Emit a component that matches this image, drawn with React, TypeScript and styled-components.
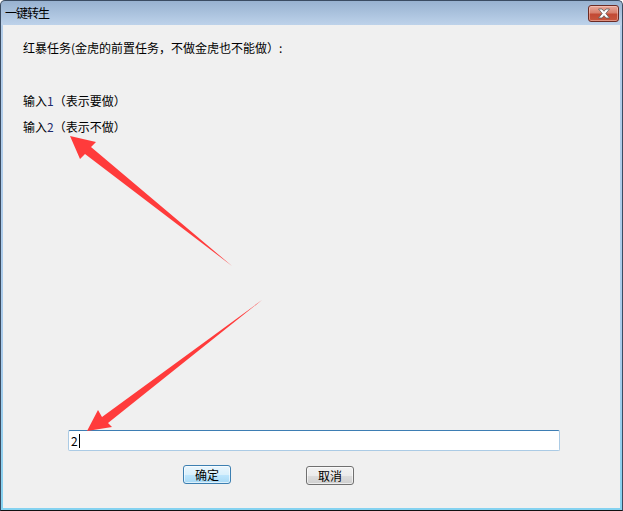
import React from "react";
import styled, { createGlobalStyle } from "styled-components";

const GlobalStyle = createGlobalStyle`
  html, body {
    margin: 0;
    padding: 0;
    width: 623px;
    height: 511px;
    overflow: hidden;
    background: #ffffff;
  }
  body {
    font-family: "Noto Sans CJK SC", "Noto Sans", sans-serif;
    font-size: 12px;
    color: #000;
  }
`;

const Frame = styled.div`
  position: relative;
  width: 623px;
  height: 511px;
  box-sizing: border-box;
  border: 1px solid #3b4c62;
  border-bottom-color: #111;
  border-radius: 5px 5px 0 0;
  background: linear-gradient(
    #98b2d0 0px,
    #bdd2ea 24px,
    #b3cde9 25px,
    #a9cbeb 70%,
    #84d2f0 100%
  );
  display: flex;
  flex-direction: column;
  padding: 0 2px 2px 2px;
`;

const TitleBar = styled.div`
  height: 24px;
  flex: none;
  display: flex;
  align-items: center;
  justify-content: space-between;
  padding: 0 1px 0 2px;
`;

const TitleText = styled.span`
  font-size: 12px;
  line-height: 16px;
  color: #000;
  letter-spacing: -1px;
`;

const CloseButton = styled.div`
  width: 31px;
  height: 17px;
  box-sizing: border-box;
  border: 1px solid #6b2b24;
  border-radius: 3px;
  background: linear-gradient(
    #e9a799 0%,
    #d8806d 45%,
    #c24a34 55%,
    #c8563d 100%
  );
  box-shadow: inset 0 0 0 1px rgba(255, 220, 210, 0.45);
  display: flex;
  align-items: center;
  justify-content: center;
`;

const Content = styled.div`
  flex: 1;
  background: #f0f0f0;
  display: flex;
  flex-direction: column;
  align-items: flex-start;
  padding: 15px 0 0 20px;
`;

const Line = styled.div<{ $gap: number }>`
  margin-top: ${(p) => p.$gap}px;
  font-size: 12px;
  line-height: 16px;
  white-space: nowrap;
`;

const Digit = styled.span`
  color: #1d2a6c;
`;

const TextBox = styled.div`
  margin: 295px 0 0 45px;
  width: 492px;
  height: 21px;
  box-sizing: border-box;
  background: #fff;
  border: 1px solid #abcbe5;
  border-top-color: #3d7db3;
  border-radius: 2px;
  display: flex;
  align-items: center;
  padding-left: 2px;
  font-size: 12px;
  line-height: 16px;
`;

const Caret = styled.span`
  display: inline-block;
  width: 1px;
  height: 14px;
  background: #000;
  margin-left: 1px;
`;

const ButtonRow = styled.div`
  margin: 14px 0 0 160px;
  display: flex;
  align-items: flex-start;
  gap: 75px;
`;

const Button = styled.div<{ $primary?: boolean }>`
  width: 48px;
  height: 19px;
  box-sizing: border-box;
  margin-top: ${(p) => (p.$primary ? 0 : 1)}px;
  border: 1px solid ${(p) => (p.$primary ? "#3c7fb1" : "#707070")};
  border-radius: 3px;
  background: ${(p) =>
    p.$primary
      ? "linear-gradient(#eaf6fd 0%, #d9f0fc 50%, #bee6fd 51%, #a7d9f5 100%)"
      : "linear-gradient(#f2f2f2 0%, #ebebeb 50%, #dddddd 51%, #cfcfcf 100%)"};
  box-shadow: inset 0 0 0 1px rgba(255, 255, 255, 0.6);
  display: flex;
  align-items: center;
  justify-content: center;
  font-size: 12px;
  line-height: 16px;
  color: #000;
`;

const Overlay = styled.svg`
  position: absolute;
  left: -1px;
  top: -1px;
  width: 623px;
  height: 511px;
  pointer-events: none;
`;

export default function App() {
  return (
    <>
      <GlobalStyle />
      <Frame>
        <TitleBar>
          <TitleText>一键转生</TitleText>
          <CloseButton>
            <svg width="14" height="11" viewBox="0 0 14 11">
              <path
                d="M1.5 1 L5 1 L7 3.3 L9 1 L12.5 1 L8.8 5.5 L12.5 10 L9 10 L7 7.7 L5 10 L1.5 10 L5.2 5.5 Z"
                fill="#ffffff"
                stroke="#5a5a5a"
                strokeWidth="0.8"
                strokeLinejoin="round"
              />
            </svg>
          </CloseButton>
        </TitleBar>
        <Content>
          <Line $gap={0}>红暴任务(金虎的前置任务，不做金虎也不能做）:</Line>
          <Line $gap={37}>
            输入<Digit>1</Digit>（表示要做）
          </Line>
          <Line $gap={10}>
            输入<Digit>2</Digit>（表示不做）
          </Line>
          <TextBox>
            2<Caret />
          </TextBox>
          <ButtonRow>
            <Button $primary>确定</Button>
            <Button>取消</Button>
          </ButtonRow>
        </Content>
        <Overlay viewBox="0 0 623 511">
          <polygon
            points="70,136 96,142 91,147 232,266 85,154 80,159"
            fill="#ff3b3b"
          />
          <polygon
            points="87,431 98,410 102,417 262,300 108,423 112,427"
            fill="#ff3b3b"
          />
        </Overlay>
      </Frame>
    </>
  );
}
